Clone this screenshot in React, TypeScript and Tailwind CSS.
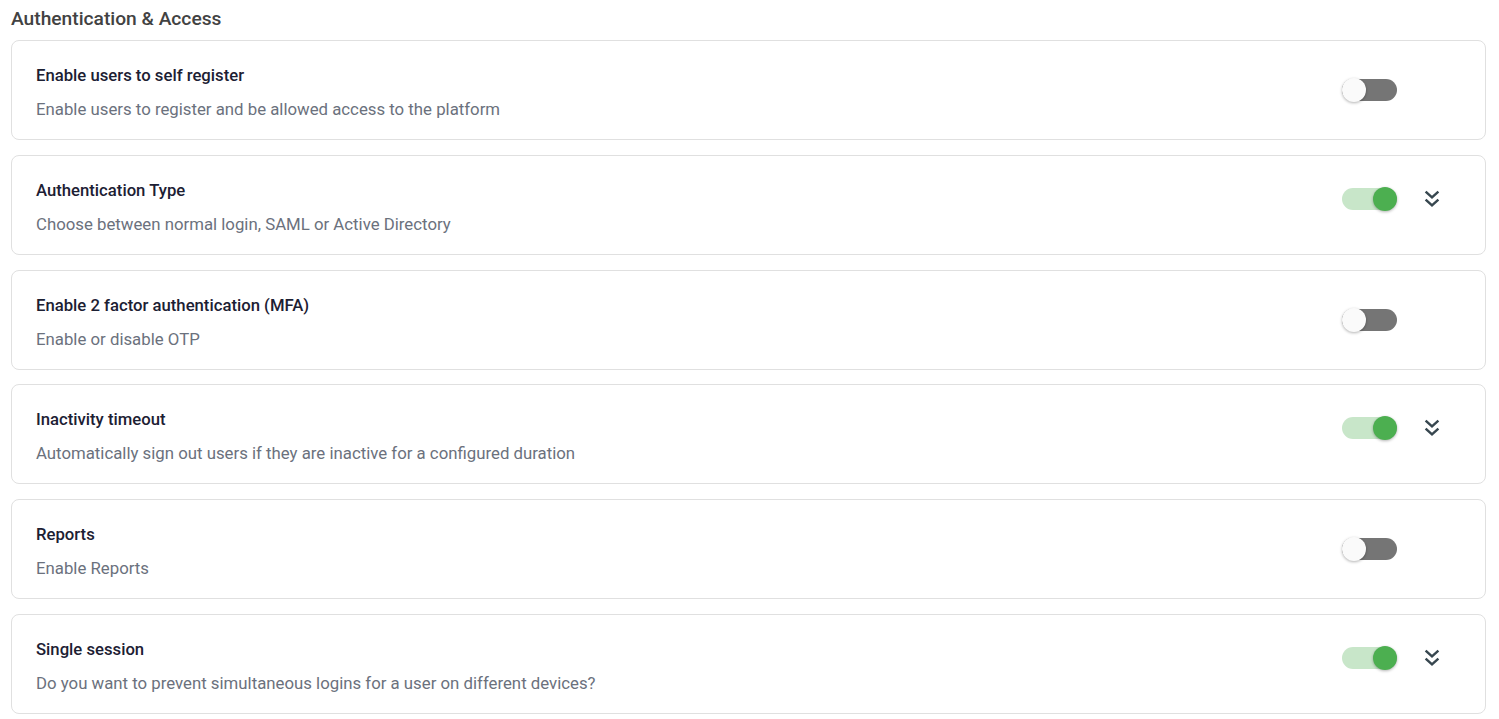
import React, { useState } from 'react';

interface Setting {
  id: string;
  title: string;
  description: string;
  enabled: boolean;
  expandable: boolean;
}

const initialSettings: Setting[] = [
  {
    id: 'self-register',
    title: 'Enable users to self register',
    description: 'Enable users to register and be allowed access to the platform',
    enabled: false,
    expandable: false,
  },
  {
    id: 'auth-type',
    title: 'Authentication Type',
    description: 'Choose between normal login, SAML or Active Directory',
    enabled: true,
    expandable: true,
  },
  {
    id: 'mfa',
    title: 'Enable 2 factor authentication (MFA)',
    description: 'Enable or disable OTP',
    enabled: false,
    expandable: false,
  },
  {
    id: 'inactivity',
    title: 'Inactivity timeout',
    description: 'Automatically sign out users if they are inactive for a configured duration',
    enabled: true,
    expandable: true,
  },
  {
    id: 'reports',
    title: 'Reports',
    description: 'Enable Reports',
    enabled: false,
    expandable: false,
  },
  {
    id: 'single-session',
    title: 'Single session',
    description: 'Do you want to prevent simultaneous logins for a user on different devices?',
    enabled: true,
    expandable: true,
  },
];

const Toggle: React.FC<{ checked: boolean; onChange: () => void }> = ({ checked, onChange }) => (
  <button
    type="button"
    role="switch"
    aria-checked={checked}
    onClick={onChange}
    className="relative h-[24px] w-[55px] shrink-0"
  >
    <span
      className={`absolute left-0 top-[1px] h-[22px] w-[55px] rounded-full ${
        checked ? 'bg-[#c8e6c9]' : 'bg-[#757575]'
      }`}
    />
    <span
      className={`absolute top-0 h-[24px] w-[24px] rounded-full shadow-[0_1px_3px_rgba(0,0,0,0.3)] ${
        checked ? 'left-[31px] bg-[#4caf50]' : 'left-0 bg-[#fafafa]'
      }`}
    />
  </button>
);

const ChevronsDown = () => (
  <svg width="16" height="18" viewBox="0 0 16 18" fill="none" stroke="#37474f" strokeWidth="2.4" strokeLinecap="square">
    <path d="M2.5 2.5 8 7.5l5.5-5" />
    <path d="M2.5 10.5 8 15.5l5.5-5" />
  </svg>
);

const SettingCard: React.FC<{ setting: Setting; onToggle: () => void }> = ({ setting, onToggle }) => (
  <div className="flex h-[100px] items-start rounded-lg border border-[#e0e0e0] bg-white">
    <div className="flex-1 pl-[24px] pt-[23px]">
      <div className="text-[16.7px] font-medium leading-[24px] text-[#1c2033]">{setting.title}</div>
      <div className="mt-[9px] text-[16.8px] leading-[24px] text-[#6b717d]">{setting.description}</div>
    </div>
    <div className={`flex items-center pr-[33px] ${setting.expandable ? 'pt-[31px]' : 'pt-[37px]'}`}>
      <Toggle checked={setting.enabled} onChange={onToggle} />
      <div className="ml-[15px] flex h-[24px] w-[40px] items-center justify-center">
        {setting.expandable && <ChevronsDown />}
      </div>
    </div>
  </div>
);

export default function App() {
  const [settings, setSettings] = useState(initialSettings);

  const toggle = (id: string) =>
    setSettings((prev) => prev.map((s) => (s.id === id ? { ...s, enabled: !s.enabled } : s)));

  return (
    <div className="min-h-screen bg-white pl-[11px] pr-[13px] font-['Roboto',sans-serif]">
      <h2 className="pt-[7px] text-[19.2px] font-medium leading-[23px] text-[#424242]">
        Authentication &amp; Access
      </h2>
      <div className="mt-[10px] flex flex-col gap-[14.8px]">
        {settings.map((s) => (
          <SettingCard key={s.id} setting={s} onToggle={() => toggle(s.id)} />
        ))}
      </div>
    </div>
  );
}
